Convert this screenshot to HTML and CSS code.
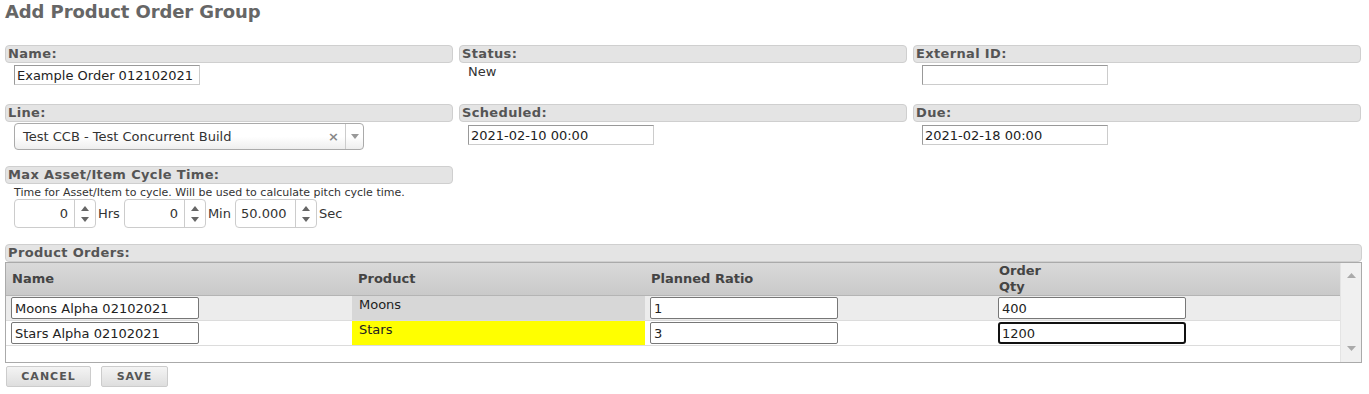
FILE: index.html
```html
<!DOCTYPE html>
<html>
<head>
<meta charset="utf-8">
<link rel="stylesheet" href="styles.css">
</head>
<body>
<h1 class="title">Add Product Order Group</h1>

<div class="row row1">
  <div class="field">
    <div class="hdr">Name:</div>
    <div class="content"><input class="txt" type="text" value="Example Order 012102021"></div>
  </div>
  <div class="field">
    <div class="hdr">Status:</div>
    <div class="content"><span class="static">New</span></div>
  </div>
  <div class="field">
    <div class="hdr">External ID:</div>
    <div class="content"><input class="txt" type="text" value=""></div>
  </div>
</div>

<div class="row row2">
  <div class="field">
    <div class="hdr">Line:</div>
    <div class="content">
      <div class="combo">
        <span class="combo-val">Test CCB - Test Concurrent Build</span>
        <span class="combo-x">×</span>
        <span class="combo-arrow"><svg width="8" height="5" viewBox="0 0 8 5"><path d="M0 0h8L4 5z" fill="#999"/></svg></span>
      </div>
    </div>
  </div>
  <div class="field">
    <div class="hdr">Scheduled:</div>
    <div class="content"><input class="txt date" type="text" value="2021-02-10 00:00"></div>
  </div>
  <div class="field">
    <div class="hdr">Due:</div>
    <div class="content"><input class="txt date" type="text" value="2021-02-18 00:00"></div>
  </div>
</div>

<div class="row row3">
  <div class="field">
    <div class="hdr">Max Asset/Item Cycle Time:</div>
    <div class="content">
      <div class="help">Time for Asset/Item to cycle. Will be used to calculate pitch cycle time.</div>
      <div class="spins">
        <div class="spin"><span class="spin-val">0</span><span class="spin-btns"><svg width="8" height="5" viewBox="0 0 8 5"><path d="M0 5h8L4 0z" fill="#666"/></svg><svg width="8" height="5" viewBox="0 0 8 5"><path d="M0 0h8L4 5z" fill="#666"/></svg></span></div>
        <span class="unit">Hrs</span>
        <div class="spin"><span class="spin-val">0</span><span class="spin-btns"><svg width="8" height="5" viewBox="0 0 8 5"><path d="M0 5h8L4 0z" fill="#666"/></svg><svg width="8" height="5" viewBox="0 0 8 5"><path d="M0 0h8L4 5z" fill="#666"/></svg></span></div>
        <span class="unit">Min</span>
        <div class="spin"><span class="spin-val left">50.000</span><span class="spin-btns"><svg width="8" height="5" viewBox="0 0 8 5"><path d="M0 5h8L4 0z" fill="#666"/></svg><svg width="8" height="5" viewBox="0 0 8 5"><path d="M0 0h8L4 5z" fill="#666"/></svg></span></div>
        <span class="unit">Sec</span>
      </div>
    </div>
  </div>
  <div class="field empty"></div>
  <div class="field empty"></div>
</div>

<div class="hdr wide">Product Orders:</div>
<div class="grid">
  <div class="grid-main">
    <div class="g-head">
      <div class="c c1">Name</div>
      <div class="c c2">Product</div>
      <div class="c c3">Planned Ratio</div>
      <div class="c c4">Order<br>Qty</div>
    </div>
    <div class="g-row alt">
      <div class="c c1"><input class="cell-in" type="text" value="Moons Alpha 02102021"></div>
      <div class="c c2 prod gray">Moons</div>
      <div class="c c3"><input class="cell-in" type="text" value="1"></div>
      <div class="c c4"><input class="cell-in" type="text" value="400"></div>
    </div>
    <div class="g-row">
      <div class="c c1"><input class="cell-in" type="text" value="Stars Alpha 02102021"></div>
      <div class="c c2 prod yellow">Stars</div>
      <div class="c c3"><input class="cell-in" type="text" value="3"></div>
      <div class="c c4"><input class="cell-in focus" type="text" value="1200"></div>
    </div>
  </div>
  <div class="scroll">
    <svg width="9" height="5" viewBox="0 0 9 5"><path d="M0 5h9L4.5 0z" fill="#aaa"/></svg>
    <svg width="9" height="5" viewBox="0 0 9 5"><path d="M0 0h9L4.5 5z" fill="#aaa"/></svg>
  </div>
</div>

<div class="buttons">
  <button class="btn">CANCEL</button>
  <button class="btn">SAVE</button>
</div>
</body>
</html>
```

FILE: styles.css
```css
* { box-sizing: border-box; }
body {
  margin: 0;
  padding: 0 8px 0 5px;
  font-family: "DejaVu Sans", Verdana, sans-serif;
  font-size: 13px;
  color: #222;
  background: #fff;
}
.title {
  margin: 0;
  padding-top: 1px;
  height: 45px;
  font-size: 18px;
  font-weight: bold;
  color: #666;
  letter-spacing: -0.1px;
}
.row {
  display: flex;
  gap: 6px;
}
.row1 { height: 59px; }
.row2 { height: 62px; }
.row3 { height: 78px; }
.field { flex: 1; }
.hdr {
  height: 18px;
  background: #e4e4e4;
  border: 1px solid #cfcfcf;
  border-radius: 4px;
  font-weight: bold;
  font-size: 13px;
  color: #555;
  padding-left: 2px;
  line-height: 16px;
  letter-spacing: 0.35px;
}
.content { padding-left: 9px; padding-top: 2px; }
.txt {
  width: 186px;
  height: 20px;
  border: 1px solid #ccc;
  border-top-color: #999;
  border-left-color: #999;
  padding: 0 2px;
  font-family: inherit;
  font-size: 13px;
  color: #222;
  margin: 0;
  outline: none;
}
.date { height: 20px; margin-top: 1px; }
.static { display: block; padding-left: 0; margin-top: -1px; color: #333; }
.combo {
  width: 350px;
  height: 27px;
  border: 1px solid #aaa;
  border-radius: 4px;
  background: linear-gradient(#fff 50%, #eee);
  display: flex;
  align-items: center;
  margin-top: -1px;
}
.combo-val { flex: 1; padding-left: 8px; color: #333; }
.combo-x { color: #888; font-weight: bold; font-size: 13px; width: 17px; }
.combo-arrow {
  width: 18px;
  height: 25px;
  border-left: 1px solid #ccc;
  display: flex;
  align-items: center;
  justify-content: center;
}
.help {
  font-size: 11px;
  color: #333;
  line-height: 13px;
  margin-top: 0;
}
.spins {
  display: flex;
  align-items: center;
  margin-top: 0;
}
.spin {
  width: 82px;
  height: 29px;
  border: 1px solid #ccc;
  border-radius: 4px;
  display: flex;
  background: #fff;
}
.spin-val {
  flex: 1;
  text-align: right;
  padding-right: 6px;
  line-height: 27px;
  color: #333;
}
.spin-val.left { text-align: left; padding-left: 5px; }
.spin-btns {
  width: 21px;
  border-left: 1px solid #ccc;
  display: flex;
  flex-direction: column;
  justify-content: center;
  align-items: center;
  gap: 6px;
}
.unit { color: #333; padding: 0 4px 0 2px; }
.wide { width: 1357px; }
.grid {
  width: 1357px;
  height: 101px;
  border: 1px solid #aaa;
  display: flex;
}
.grid-main { flex: 1; }
.g-head {
  display: flex;
  height: 33px;
  background: linear-gradient(#d9d9d9, #c9c9c9);
  border-bottom: 1px solid #b4b4b4;
  font-weight: bold;
  color: #444;
}
.g-head .c {
  padding-left: 6px;
  display: flex;
  align-items: center;
  line-height: 16px;
}
.c1 { width: 346px; }
.c2 { width: 293px; }
.c3 { width: 348px; }
.c4 { width: 347px; }
.g-row {
  display: flex;
  height: 25px;
  border-bottom: 1px solid #dcdcdc;
  background: #fff;
}
.g-row.alt { background: #ececec; }
.g-row .c { padding-left: 5px; padding-top: 1px; }
.g-row .c2 { padding-left: 7px; padding-top: 1px; color: #222; }
.prod.gray { background: #d7d7d7; }
.prod.yellow { background: #ffff00; }
.cell-in {
  width: 188px;
  height: 22px;
  border: 1px solid #777;
  border-radius: 2px;
  padding: 0 3px;
  font-family: inherit;
  font-size: 13px;
  color: #222;
  margin: 0;
  background: #fff;
  outline: none;
}
.cell-in.focus { border: 2px solid #111; border-radius: 3px; padding: 0 2px; }
.scroll {
  width: 21px;
  background: #f0f0f0;
  border-left: 1px solid #e4e4e4;
  display: flex;
  flex-direction: column;
  justify-content: space-between;
  align-items: center;
  padding: 10px 0 11px;
}
.buttons { display: flex; gap: 10px; margin-top: 3px; padding-left: 1px; }
.btn {
  width: 85px;
  height: 21px;
  border: 1px solid #ccc;
  border-radius: 2px;
  background: linear-gradient(#f4f4f4, #dedede);
  font-family: inherit;
  font-size: 11px;
  font-weight: bold;
  letter-spacing: 1px;
  color: #555;
  padding: 0;
}
.btn + .btn { width: 67px; }
```
